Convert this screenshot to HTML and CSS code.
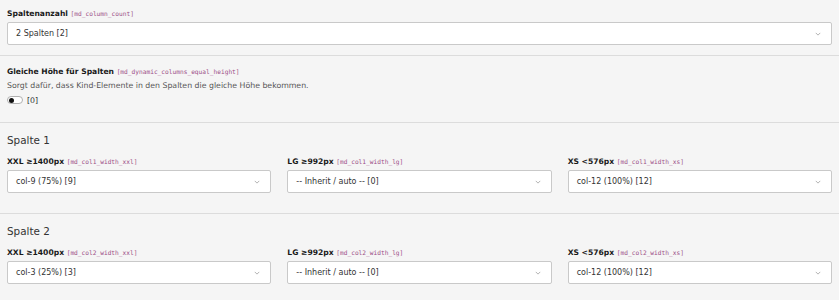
FILE: index.html
```html
<!DOCTYPE html>
<html>
<head>
	<title>Spalten</title>
	<meta charset="UTF-8">
	<link rel="stylesheet" href="styles.css">
</head>
<body>
	<div class="section sec-count">
		<div class="field-label">Spaltenanzahl <code>[md_column_count]</code></div>
		<div class="select"><span>2 Spalten [2]</span><svg class="chev" viewBox="0 0 8 5"><path d="M1 1 L4 4 L7 1"/></svg></div>
	</div>

	<div class="section sec-height">
		<div class="field-label">Gleiche Höhe für Spalten <code>[md_dynamic_columns_equal_height]</code></div>
		<div class="field-desc">Sorgt dafür, dass Kind-Elemente in den Spalten die gleiche Höhe bekommen.</div>
		<div class="toggle-row"><span class="toggle"></span><span>[0]</span></div>
	</div>

	<div class="section sec-col">
		<h2>Spalte 1</h2>
		<div class="grid">
			<div>
				<div class="field-label">XXL ≥1400px <code>[md_col1_width_xxl]</code></div>
				<div class="select"><span>col-9 (75%) [9]</span><svg class="chev" viewBox="0 0 8 5"><path d="M1 1 L4 4 L7 1"/></svg></div>
			</div>
			<div>
				<div class="field-label">LG ≥992px <code>[md_col1_width_lg]</code></div>
				<div class="select"><span>-- Inherit / auto -- [0]</span><svg class="chev" viewBox="0 0 8 5"><path d="M1 1 L4 4 L7 1"/></svg></div>
			</div>
			<div>
				<div class="field-label">XS &lt;576px <code>[md_col1_width_xs]</code></div>
				<div class="select"><span>col-12 (100%) [12]</span><svg class="chev" viewBox="0 0 8 5"><path d="M1 1 L4 4 L7 1"/></svg></div>
			</div>
		</div>
	</div>

	<div class="section sec-col last">
		<h2>Spalte 2</h2>
		<div class="grid">
			<div>
				<div class="field-label">XXL ≥1400px <code>[md_col2_width_xxl]</code></div>
				<div class="select"><span>col-3 (25%) [3]</span><svg class="chev" viewBox="0 0 8 5"><path d="M1 1 L4 4 L7 1"/></svg></div>
			</div>
			<div>
				<div class="field-label">LG ≥992px <code>[md_col2_width_lg]</code></div>
				<div class="select"><span>-- Inherit / auto -- [0]</span><svg class="chev" viewBox="0 0 8 5"><path d="M1 1 L4 4 L7 1"/></svg></div>
			</div>
			<div>
				<div class="field-label">XS &lt;576px <code>[md_col2_width_xs]</code></div>
				<div class="select"><span>col-12 (100%) [12]</span><svg class="chev" viewBox="0 0 8 5"><path d="M1 1 L4 4 L7 1"/></svg></div>
			</div>
		</div>
	</div>
</body>
</html>
```

FILE: styles.css
```css
body {
	margin: 0;
	background-color: #f5f5f5;
	font-family: "DejaVu Sans", Verdana, sans-serif;
	font-size: 8px;
	color: #1a1a1a;
}

.section {
	padding: 10px 7px;
	border-bottom: 1px solid #dcdcdc;
}

.sec-count {
	padding-top: 9px;
}

.sec-height {
	padding-top: 11px;
	padding-bottom: 17px;
}

.sec-col {
	padding-bottom: 20px;
}

.section.last {
	border-bottom: none;
}

h2 {
	margin: 0 0 10px 0;
	font-size: 10.4px;
	font-weight: normal;
	line-height: 14px;
	color: #333;
}

.field-label {
	margin-bottom: 3px;
	font-size: 7.6px;
	font-weight: bold;
	line-height: 10px;
	white-space: nowrap;
}

.field-label code {
	font-family: "DejaVu Sans Mono", monospace;
	font-size: 6.2px;
	font-weight: normal;
	color: #9c4f87;
}

.field-desc {
	margin-top: 4px;
	font-size: 7.8px;
	line-height: 10px;
	color: #555;
}

.toggle-row {
	display: flex;
	align-items: center;
	gap: 4px;
	margin-top: 4px;
	height: 10px;
	font-size: 7.8px;
	color: #333;
}

.toggle {
	position: relative;
	width: 14px;
	height: 6px;
	border: 1px solid #b0b0b0;
	border-radius: 4px;
	background: #fff;
}

.toggle::before {
	content: "";
	position: absolute;
	left: 1px;
	top: 0.5px;
	width: 5px;
	height: 5px;
	border-radius: 50%;
	background: #111;
}

.select {
	display: flex;
	align-items: center;
	justify-content: space-between;
	height: 21px;
	padding: 0 10px 0 8px;
	border: 1px solid #c9c9c9;
	border-radius: 2px;
	background: #fff;
	color: #333;
}

.chev {
	width: 6px;
	height: 4px;
	fill: none;
	stroke: #999;
	stroke-width: 1;
}

.grid {
	display: grid;
	grid-template-columns: 1fr 1fr 1fr;
	gap: 16px;
}
```
